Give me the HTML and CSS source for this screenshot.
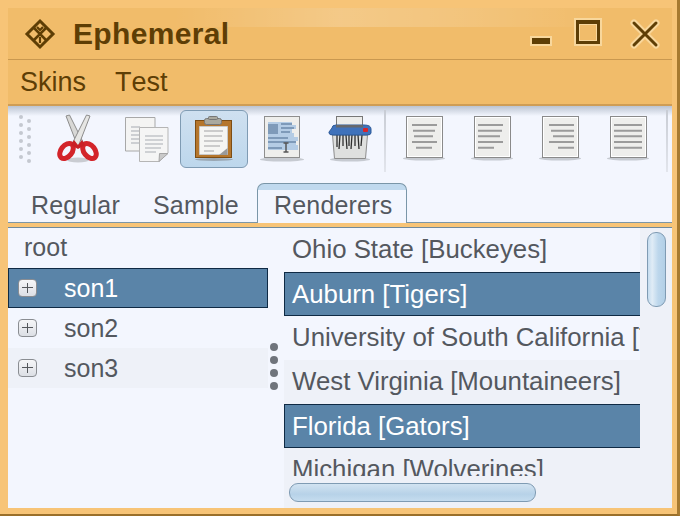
FILE: index.html
```html
<!DOCTYPE html>
<html lang="en">
<head>
<meta charset="utf-8">
<title>Ephemeral</title>
<link rel="stylesheet" href="styles.css">
</head>
<body>
<div class="window">
  <header class="titlebar">
    <svg class="logo" viewBox="0 0 32 32" fill="none" stroke="#5e3e05" stroke-width="3">
      <path d="M16 3 29 16 16 29 3 16Z"/>
      <path d="M9.500 9.500 22.500 22.500M22.500 9.500 9.500 22.500" stroke-width="2.500"/>
      <path d="M16 19V25M13 9 16 12 19 9" stroke-width="2.200"/>
    </svg>
    <span class="title">Ephemeral</span>
    <div class="controls">
      <span class="ctl-min"></span>
      <span class="ctl-max"></span>
      <svg class="ctl-close" viewBox="0 0 30 30" fill="none" stroke-linecap="round">
        <path d="M4 4 26 26M26 4 4 26" stroke="#f8d79c" stroke-width="7"/>
        <path d="M4 4 26 26M26 4 4 26" stroke="#5e3e05" stroke-width="3"/>
      </svg>
    </div>
  </header>
  <nav class="menubar"><span class="menu-skins">Skins</span><span>Test</span></nav>
  <div class="toolbar">
    <div class="grip"><i></i><i></i><i></i><i></i><i></i><i></i><i></i><i></i><i></i><i></i><i></i><i></i></div>
    <div class="tool">
      <svg class="icon" viewBox="0 0 48 50">
        <ellipse cx="24" cy="46" rx="11" ry="2.500" fill="#c9ccd2"/>
        <path d="M12 2 15.500 1 29 28 24 33Z" fill="#d8d8d6" stroke="#8b8b8b"/>
        <path d="M36 2 32.500 1 19 28 24 33Z" fill="#e6e6e4" stroke="#8b8b8b"/>
        <ellipse cx="12.500" cy="37" rx="5.500" ry="8.500" transform="rotate(38 12.500 37)" fill="none" stroke="#d3242a" stroke-width="5"/>
        <ellipse cx="35.500" cy="37" rx="5.500" ry="8.500" transform="rotate(-38 35.500 37)" fill="none" stroke="#d3242a" stroke-width="5"/>
        <path d="M20 26 24 31 28 26 31 31 24 35 17 31Z" fill="#c91f25"/>
      </svg>
    </div>
    <div class="tool">
      <svg class="icon" viewBox="0 0 48 50">
        <path d="M3.500 3.500H33V37H3.500Z" fill="#f4f4f3" stroke="#a8a8a8"/>
        <path d="M9 13H18M9 17H18M9 21H18M9 25H18M9 29H18" stroke="#cdcfd2" stroke-width="2"/>
        <path d="M17.500 13.500H46V39L37 47.500H17.500Z" fill="#f5f5f5" stroke="#b5b5b5"/>
        <path d="M37 47.500 37.500 39.500H46Z" fill="#c9c9c9" stroke="#a5a5a5"/>
        <path d="M23 22H41M23 26H41M23 30H41M23 34H39M23 38H34" stroke="#cfd1d4" stroke-width="2"/>
      </svg>
    </div>
    <div class="tool tool-active">
      <svg class="icon" viewBox="0 0 48 50">
        <ellipse cx="24" cy="45.500" rx="19" ry="1.500" fill="#9aa7b3"/>
        <rect x="5.500" y="6.500" width="36" height="37" fill="#b5762c" stroke="#7d4d14"/>
        <path d="M9.500 12.500H37.500V40.500H9.500Z" fill="#f5f5f3" stroke="#c9c9c9"/>
        <path d="M14 17H33M14 22H32M14 27H33M14 32H30M14 37H24" stroke="#cbcbcb" stroke-width="2"/>
        <path d="M29 41 37.500 34V41Z" fill="#9a9a9a"/>
        <rect x="14.500" y="4.500" width="17" height="6" rx="2" fill="#aaa99f" stroke="#777"/>
        <rect x="18.500" y="2.500" width="9" height="3" rx="1" fill="#aaa99f" stroke="#777"/>
      </svg>
    </div>
    <div class="tool">
      <svg class="icon" viewBox="0 0 48 50">
        <ellipse cx="24" cy="45.500" rx="22" ry="2" fill="#c6cad1"/>
        <rect x="6.500" y="2.500" width="35" height="41" fill="#eeeeec" stroke="#8e8e8e"/>
        <path d="M10 8H34V11H38V15H34V19H36V23H40V27H38V31H40V36H10Z" fill="#b4cce5"/>
        <rect x="10" y="10" width="10" height="10" fill="#7e9ab9"/>
        <path d="M23 10H34M23 14H36M23 18H32M10 24H30M10 28H38M10 34H24" stroke="#7e9ab9" stroke-width="2"/>
        <path d="M25.500 29H30.500M28 29V38M25.500 38H30.500" stroke="#555" stroke-width="1.500" fill="none"/>
      </svg>
    </div>
    <div class="tool">
      <svg class="icon" viewBox="0 0 48 50">
        <ellipse cx="24" cy="45.500" rx="20" ry="2" fill="#c6cad1"/>
        <path d="M6.500 21H41.500L39.500 44.500H8.500Z" fill="#dfe0df" stroke="#8c8c8c"/>
        <path d="M11 21V33M14 21 13 35M17 21V32M20 21 21 35M23 21V32M26 21 25 35M29 21V32M32 21 33 35M36 21 35 32" stroke="#2e2e2e" stroke-width="1.300"/>
        <rect x="10.500" y="2.500" width="26" height="9" fill="#ececea" stroke="#777"/>
        <path d="M6 14Q6 11 10 11H38Q45 11 45 15V19Q45 21 41 21H7Q3 21 3 19V18Z" fill="#3f72bb" stroke="#2d5a99"/>
        <rect x="10" y="11" width="27" height="2.500" fill="#66686c"/>
        <rect x="37" y="14" width="5" height="4" rx="1" fill="#d8242a"/>
      </svg>
    </div>
    <span class="sep sep-first"></span>
    <div class="tool">
      <svg class="icon" viewBox="0 0 48 50">
        <ellipse cx="24" cy="44.500" rx="21" ry="2" fill="#c6cad1"/>
        <rect x="6.500" y="2.500" width="36" height="41" fill="#eeeeec" stroke="#8a8a8a"/>
        <rect x="7.500" y="3.500" width="34" height="39" fill="none" stroke="#fff"/>
        <path d="M12 11H37M13 16.700H35M14 22.300H33M12 28H37M16 33.700H32" stroke="#9b9b9b" stroke-width="2"/>
      </svg>
    </div>
    <div class="tool">
      <svg class="icon" viewBox="0 0 48 50">
        <ellipse cx="24" cy="44.500" rx="21" ry="2" fill="#c6cad1"/>
        <rect x="6.500" y="2.500" width="36" height="41" fill="#eeeeec" stroke="#8a8a8a"/>
        <rect x="7.500" y="3.500" width="34" height="39" fill="none" stroke="#fff"/>
        <path d="M10 11H35M10 16.700H34M10 22.300H32M10 28H35M10 33.700H26" stroke="#9b9b9b" stroke-width="2"/>
      </svg>
    </div>
    <div class="tool">
      <svg class="icon" viewBox="0 0 48 50">
        <ellipse cx="24" cy="44.500" rx="21" ry="2" fill="#c6cad1"/>
        <rect x="6.500" y="2.500" width="36" height="41" fill="#eeeeec" stroke="#8a8a8a"/>
        <rect x="7.500" y="3.500" width="34" height="39" fill="none" stroke="#fff"/>
        <path d="M13 11H38M15 16.700H38M17 22.300H38M13 28H38M22 33.700H38" stroke="#9b9b9b" stroke-width="2"/>
      </svg>
    </div>
    <div class="tool">
      <svg class="icon" viewBox="0 0 48 50">
        <ellipse cx="24" cy="44.500" rx="21" ry="2" fill="#c6cad1"/>
        <rect x="6.500" y="2.500" width="36" height="41" fill="#eeeeec" stroke="#8a8a8a"/>
        <rect x="7.500" y="3.500" width="34" height="39" fill="none" stroke="#fff"/>
        <path d="M10 11H38M10 16.700H38M10 22.300H38M10 28H38M10 33.700H38" stroke="#9b9b9b" stroke-width="2"/>
      </svg>
    </div>
    <span class="sep"></span>
  </div>
  <div class="tabs">
    <span class="tab">Regular</span>
    <span class="tab">Sample</span>
    <span class="tab tab-active">Renderers</span>
  </div>
  <main class="pane">
    <section class="tree">
      <div class="tree-root">root</div>
      <div class="tree-row tree-sel"><span class="exp"></span>son1</div>
      <div class="tree-row"><span class="exp"></span>son2</div>
      <div class="tree-row tree-alt"><span class="exp"></span>son3</div>
    </section>
    <div class="splitter"><i></i><i></i><i></i><i></i></div>
    <section class="right">
      <div class="right-top">
        <div class="list">
          <div class="item">Ohio State [Buckeyes]</div>
          <div class="item item-sel">Auburn [Tigers]</div>
          <div class="item">University of South California [Trojans]</div>
          <div class="item item-alt">West Virginia [Mountaineers]</div>
          <div class="item item-sel">Florida [Gators]</div>
          <div class="item item-alt">Michigan [Wolverines]</div>
        </div>
        <div class="vtrack"><div class="vthumb"></div></div>
      </div>
      <div class="htrack"><div class="hthumb"></div></div>
    </section>
  </main>
</div>
</body>
</html>
```
FILE: styles.css
```css
* { box-sizing: border-box; }
html, body { margin: 0; padding: 0; }
body { width: 680px; height: 516px; overflow: hidden; font-family: "Liberation Sans", Arial, sans-serif; }
.window {
  width: 680px; height: 516px;
  background: #f7c477;
  border-right: 3px solid #a77a30;
  border-bottom: 2px solid #9a6f2a;
  padding: 8px 5px 6px 8px;
  display: flex; flex-direction: column;
}
.titlebar {
  height: 52px; flex: none;
  display: flex; align-items: center;
  padding: 0 12px 0 16px;
  border-bottom: 1px solid #c9984f;
  background:
    linear-gradient(90deg, rgba(255,255,255,0) 25%, rgba(255,255,255,.2) 50%, rgba(255,255,255,.12) 70%, rgba(255,255,255,0) 90%) 0 0 / 100% 19px no-repeat,
    #f1bc6a;
}
.logo { width: 32px; height: 32px; flex: none; }
.title { margin-left: 17px; font-size: 30px; font-weight: 700; color: #5e3e05; letter-spacing: .35px; }
.controls { margin-left: auto; display: flex; align-items: center; height: 100%; }
.ctl-min { width: 22px; height: 10px; background: #5e3e05; border: 2px solid #f8d79c; margin-top: 15px; }
.ctl-max { width: 24px; height: 24px; margin: 0 0 3px 24px; border: 3px solid #5e3e05; border-top-width: 4px; outline: 2px solid #f8d79c; box-shadow: inset 0 0 0 1px #f8d79c; }
.ctl-close { width: 30px; height: 30px; margin-left: 30px; }
.menubar {
  height: 46px; flex: none;
  display: flex; align-items: center;
  padding: 0 0 0 12px;
  font-size: 27px; font-kerning: none; color: #5e3e05;
  background: #f1bc6a;
  border-bottom: 2px solid #cf9d55;
}
.menu-skins { margin-right: 29px; }
.toolbar {
  height: 66px; flex: none;
  display: flex; align-items: flex-start;
  padding: 4px 0 0 11px;
  background: linear-gradient(#bcc4d2, #f3f6fe 10px) #f3f6fe;
}
.grip { width: 25px; margin-top: 5px; display: grid; grid-template-columns: 4px 4px; column-gap: 4px; grid-auto-rows: 8px; height: 48px; align-content: start; }
.grip i { width: 4px; height: 4px; border-radius: 50%; background: #c4c8d0; margin-bottom: 4px; }
.grip i:nth-child(even) { transform: translateY(4px); }
.tool { width: 68px; height: 58px; display: flex; align-items: center; justify-content: center; flex: none; }
.tool-active { background: linear-gradient(#cfe0f0, #bdd7ec); border: 1px solid #7f9bb3; border-radius: 6px; }
.icon { width: 48px; height: 50px; filter: blur(.35px); }
.sep { width: 2px; height: 62px; background: linear-gradient(#c8ccd4, #e2e5ec); flex: none; }
.sep-first { margin-right: 4px; }
.tool + .sep:last-child { margin-left: 4px; }
.tabs {
  height: 51px; flex: none;
  display: flex; align-items: flex-end;
  padding-left: 6px;
  background: linear-gradient(#f3f6fe 50px, #7a96a8 50px);
  font-size: 25px; color: #54585f; letter-spacing: .2px;
}
.tab { height: 40px; padding: 6px 16px 0 17px; line-height: 32px; }
.tab-active {
  width: 150px; margin-left: 2px; padding: 6px 0 0 16px;
  border: 1px solid #7a96a8; border-bottom: 0;
  border-radius: 7px 7px 0 0;
  background: linear-gradient(#c0d9ee 6px, #f3f6fe 6px);
  line-height: 30px;
  letter-spacing: .2px;
}
.pane {
  flex: 1; min-height: 0;
  display: flex;
  margin-top: 4px;
  border-top: 1px solid #6f8a9c;
  background: #f3f6fe;
  font-size: 25px; color: #54585f;
}
.tree { width: 260px; flex: none; }
.tree-root { height: 40px; line-height: 38px; padding-left: 16px; }
.tree-row { height: 40px; line-height: 38px; display: flex; align-items: center; padding-left: 10px; }
.tree-sel { background: #5a84a8; border: 1px solid #0f2a44; color: #fff; padding-left: 9px; }
.tree-alt { background: #eef1f8; }
.exp {
  position: relative;
  width: 19px; height: 18px; border: 1px solid #8a8d92; border-radius: 4px;
  background: linear-gradient(#f6f6f8, #dcdfe5);
  margin-right: 27px; flex: none;
}
.exp::before { content: ""; position: absolute; left: 3px; right: 3px; top: 7px; height: 1px; background: #55585c; }
.exp::after { content: ""; position: absolute; top: 3px; bottom: 3px; left: 8px; width: 1px; background: #55585c; }
.splitter { width: 16px; flex: none; padding: 115px 0 0 2px; display: flex; flex-direction: column; gap: 5px; }
.splitter i { width: 8px; height: 8px; border-radius: 50%; background: #6f747c; }
.right { flex: 1; min-width: 0; display: flex; flex-direction: column; }
.right-top { height: 248px; flex: none; display: flex; }
.list { width: 356px; flex: none; overflow: hidden; font-size: 25.8px; }
.item { height: 44px; line-height: 42px; padding-left: 8px; white-space: nowrap; overflow: hidden; }
.item-sel { background: #5a84a8; color: #fff; border: 1px solid #0f2a44; border-right: 0; padding-left: 7px; }
.item-alt { background: #eef1f8; }
.vtrack { flex: 1; background: #eef1f8; padding: 4px 0 0 7px; }
.vthumb { width: 19px; height: 75px; border: 1px solid #7f9bb3; border-radius: 9px; background: linear-gradient(90deg, #c5dcef, #e0ecf6 25%, #bdd7ec 60%, #b2cfe6); }
.htrack { flex: 1; background: #eef1f8; padding: 7px 0 0 5px; }
.hthumb { width: 247px; height: 19px; border: 1px solid #7f9bb3; border-radius: 9px; background: linear-gradient(#d2e3f1, #b7d2e8 60%, #c5dcef); }
```
